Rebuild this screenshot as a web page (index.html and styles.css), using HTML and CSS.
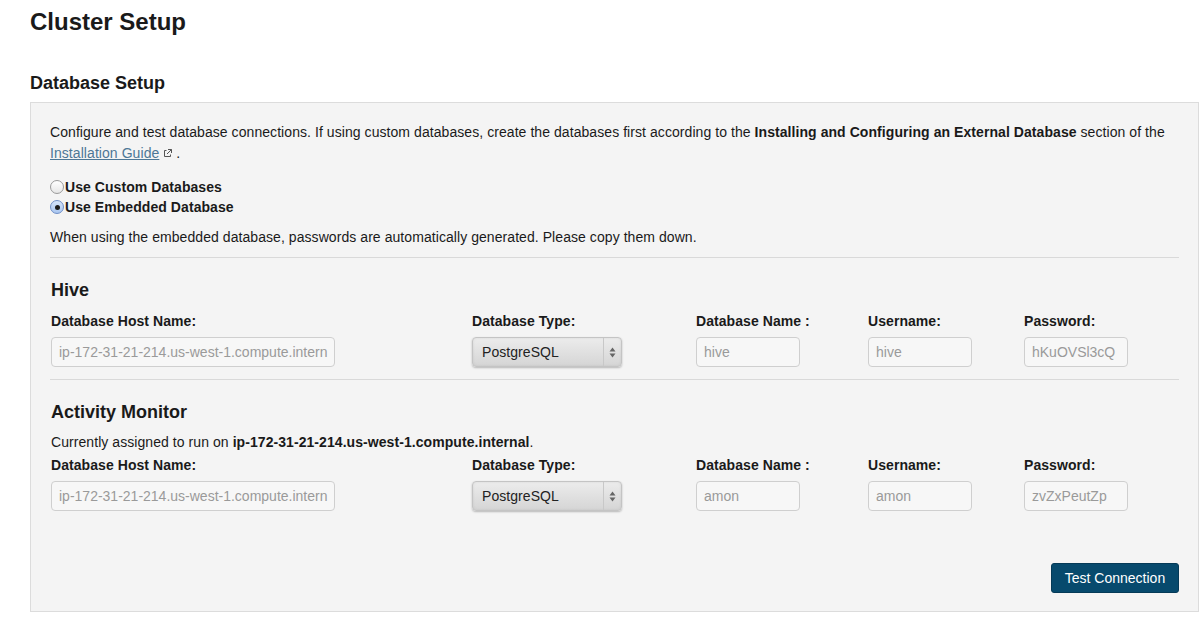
FILE: index.html
```html
<!DOCTYPE html>
<html>
<head>
<meta charset="utf-8">
<link rel="stylesheet" href="styles.css">
</head>
<body>
<div class="page">
  <h1 class="title">Cluster Setup</h1>
  <h2 class="subtitle">Database Setup</h2>
  <div class="panel">
    <p class="intro">Configure and test database connections. If using custom databases, create the databases first according to the <b>Installing and Configuring an External Database</b> section of the <a class="link" href="#">Installation Guide</a><svg class="ext" width="9" height="9" viewBox="0 0 9 9"><path d="M3.5 1.5H1.5v6h6v-2" fill="none" stroke="#555" stroke-width="1"/><path d="M5 0.5h3.5V4M8.5 0.5L4 5" fill="none" stroke="#555" stroke-width="1"/></svg> .</p>
    <div class="radios">
      <label class="radio"><span class="dot"></span>Use Custom Databases</label>
      <label class="radio"><span class="dot on"></span>Use Embedded Database</label>
    </div>
    <p class="note">When using the embedded database, passwords are automatically generated. Please copy them down.</p>
    <div class="section">
      <h3 class="sec-title">Hive</h3>
      <div class="grid">
        <div class="lbl">Database Host Name:</div>
        <div class="lbl">Database Type:</div>
        <div class="lbl">Database Name :</div>
        <div class="lbl">Username:</div>
        <div class="lbl">Password:</div>
        <div class="inp host">ip-172-31-21-214.us-west-1.compute.intern</div>
        <div class="select"><span class="sel-text">PostgreSQL</span><span class="sel-arrows"><svg width="7" height="11" viewBox="0 0 7 11"><path d="M3.5 0.5L6.5 4.5H0.5Z M3.5 10.5L6.5 6.5H0.5Z" fill="#666"/></svg></span></div>
        <div class="inp short">hive</div>
        <div class="inp short">hive</div>
        <div class="inp short">hKuOVSl3cQ</div>
      </div>
    </div>
    <div class="section">
      <h3 class="sec-title">Activity Monitor</h3>
      <p class="assigned">Currently assigned to run on <b>ip-172-31-21-214.us-west-1.compute.internal</b>.</p>
      <div class="grid tight">
        <div class="lbl">Database Host Name:</div>
        <div class="lbl">Database Type:</div>
        <div class="lbl">Database Name :</div>
        <div class="lbl">Username:</div>
        <div class="lbl">Password:</div>
        <div class="inp host">ip-172-31-21-214.us-west-1.compute.intern</div>
        <div class="select"><span class="sel-text">PostgreSQL</span><span class="sel-arrows"><svg width="7" height="11" viewBox="0 0 7 11"><path d="M3.5 0.5L6.5 4.5H0.5Z M3.5 10.5L6.5 6.5H0.5Z" fill="#666"/></svg></span></div>
        <div class="inp short">amon</div>
        <div class="inp short">amon</div>
        <div class="inp short">zvZxPeutZp</div>
      </div>
    </div>
    <div class="actions">
      <button class="btn">Test Connection</button>
    </div>
  </div>
</div>
</body>
</html>
```
FILE: styles.css
```css
* { box-sizing: border-box; }
html, body { margin: 0; padding: 0; background: #fff; }
body {
  font-family: "Liberation Sans", Arial, sans-serif;
  color: #1a1a1a;
  font-size: 14px;
  letter-spacing: 0.065px;
}
.page {
  padding: 7px 5px 0 30px;
}
.title {
  margin: 0;
  font-size: 24px;
  line-height: 30px;
  font-weight: bold;
  letter-spacing: 0;
}
.subtitle {
  margin: 35px 0 0;
  font-size: 18px;
  line-height: 22px;
  font-weight: bold;
  letter-spacing: 0;
}
.panel {
  margin-top: 8px;
  background: #f4f4f4;
  border: 1px solid #dcdcdc;
  padding: 19px 19px 19px 20px;
  height: 510px;
}
.intro {
  margin: 0 0 0 -1px;
  line-height: 21px;
}
.link {
  color: #4d7796;
  text-decoration: underline;
}
.ext { margin-left: 4px; vertical-align: 0px; }
.radios {
  margin: 13px 0 0 -1px;
  display: flex;
  flex-direction: column;
}
.radio {
  display: flex;
  align-items: center;
  font-weight: bold;
  line-height: 20px;
  height: 20px;
}
.dot {
  width: 14px;
  height: 14px;
  border-radius: 50%;
  border: 1px solid #9a9a9a;
  background: linear-gradient(#fff, #e6e6e6);
  margin-right: 1px;
  display: flex;
  align-items: center;
  justify-content: center;
}
.dot.on {
  border-color: #6f8fc7;
  background: linear-gradient(#d6e5fb, #a9c6f0);
}
.dot.on::after {
  content: "";
  width: 5px;
  height: 5px;
  border-radius: 50%;
  background: #1b1b1b;
}
.note {
  margin: 10px 0 0 -1px;
  line-height: 20px;
}
.section {
  border-top: 1px solid #d9d9d9;
  margin-top: 10px;
  margin-left: -1px;
  padding-left: 1px;
}
.sec-title {
  margin: 21px 0 0;
  font-size: 18px;
  line-height: 22px;
  font-weight: bold;
  letter-spacing: 0;
}
.assigned {
  margin: 9px 0 0;
  line-height: 20px;
}
.grid {
  display: grid;
  grid-template-columns: 421px 224px 172px 156px auto;
  row-gap: 11px;
  margin-top: 15px;
  padding-bottom: 2px;
}
.grid.tight { margin-top: 8px; }
.lbl {
  font-weight: bold;
  line-height: 10px;
  height: 10px;
}
.inp {
  height: 30px;
  border: 1px solid #cfcfcf;
  border-radius: 4px;
  background: #f7f7f7;
  color: #9a9a9a;
  padding: 0 7px;
  line-height: 28px;
  white-space: nowrap;
  overflow: hidden;
  letter-spacing: 0;
}
.inp.host { width: 284px; }
.inp.short { width: 104px; }
.select {
  width: 150px;
  height: 30px;
  border-radius: 4px;
  border: 1px solid #c4c4c4;
  background: linear-gradient(#ececec, #d5d5d5);
  box-shadow: 0 1px 2px rgba(0,0,0,0.25), inset 0 0 3px rgba(0,0,0,0.08);
  display: flex;
  align-items: stretch;
  color: #222;
}
.sel-text {
  flex: 1;
  padding-left: 9px;
  line-height: 28px;
  border-right: 1px solid #c8c8c8;
}
.sel-arrows {
  width: 17px;
  display: flex;
  align-items: center;
  justify-content: center;
}
.actions {
  display: flex;
  justify-content: flex-end;
  margin-top: 50px;
}
.btn {
  font-family: "Liberation Sans", Arial, sans-serif;
  font-size: 14px;
  color: #fff;
  background: #074a6d;
  border: 1px solid #053a57;
  border-radius: 3px;
  height: 30px;
  width: 128px;
  padding: 0;
}
```
